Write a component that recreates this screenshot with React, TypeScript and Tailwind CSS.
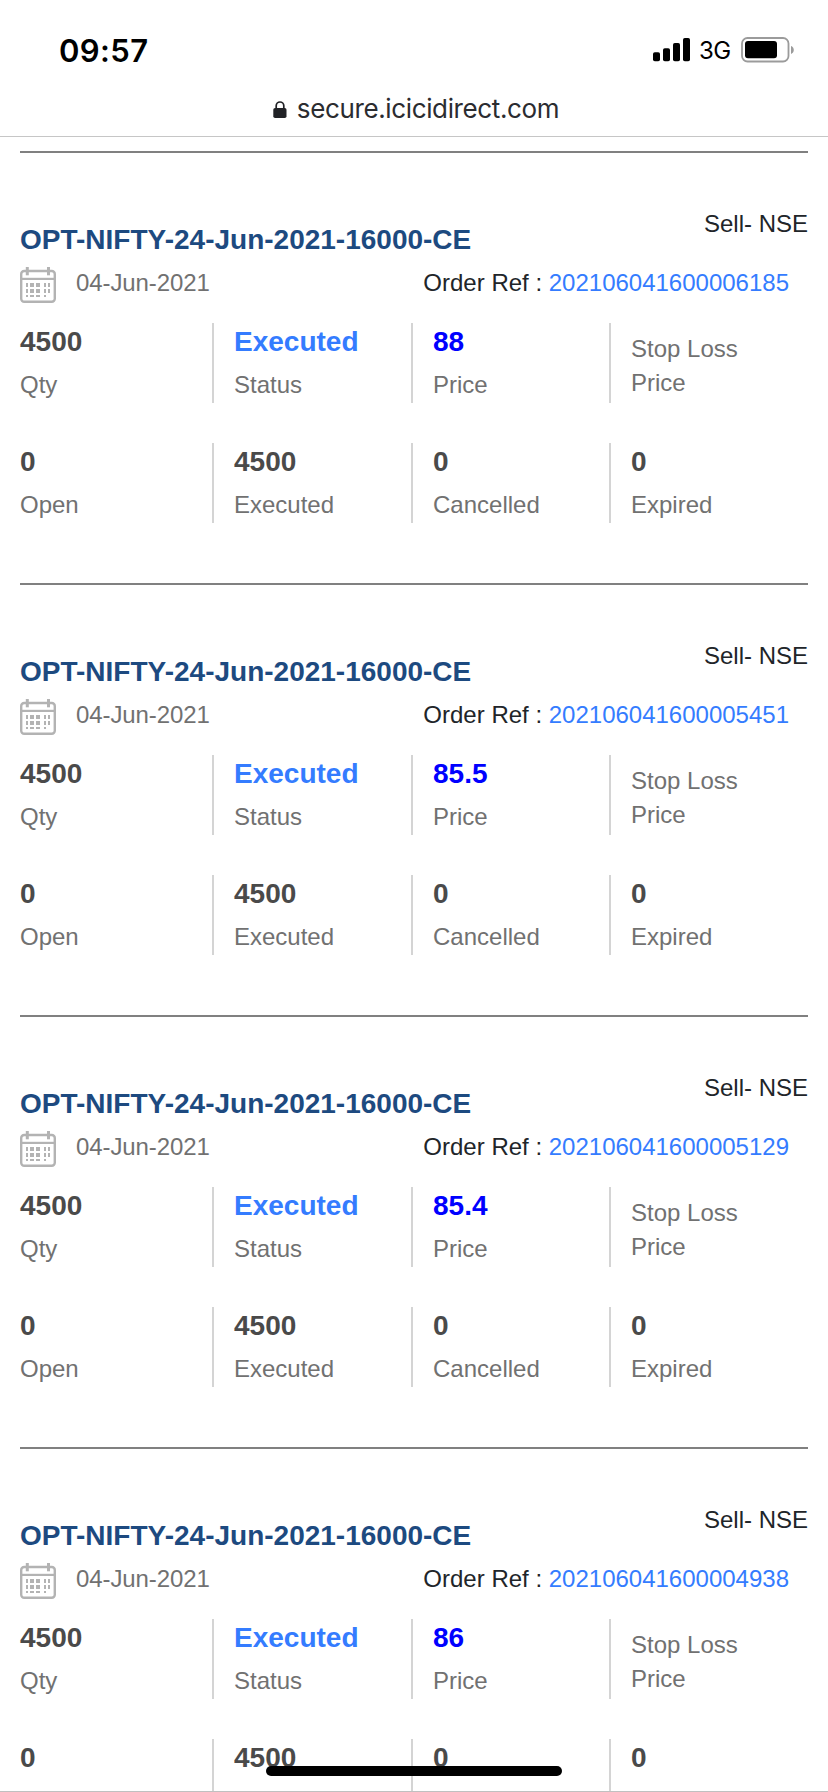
type Order = {
  ref: string;
  price: string;
};

const ORDERS: Order[] = [
  { ref: '202106041600006185', price: '88' },
  { ref: '202106041600005451', price: '85.5' },
  { ref: '202106041600005129', price: '85.4' },
  { ref: '202106041600004938', price: '86' },
];

function StatusBar() {
  return (
    <div className="flex h-[85px] items-center justify-between pt-[15px] pr-[33px] pl-[59px]">
      <span className="pt-px text-[31px] leading-9 font-semibold tracking-[0.4px] text-black">09:57</span>
      <div className="flex items-center">
        <svg className="h-6 w-[38px]" viewBox="0 0 38 24" fill="#000">
          <rect x="0" y="14.2" width="7" height="9" rx="1.8" />
          <rect x="10" y="10.2" width="7" height="13" rx="1.8" />
          <rect x="20" y="5" width="7" height="18.2" rx="1.8" />
          <rect x="30" y="0" width="7" height="23.2" rx="1.8" />
        </svg>
        <span className="ml-2 w-[42px] pt-0.5 text-[24px] leading-7 tracking-[-0.6px] text-black">3G</span>
        <svg className="h-[26px] w-[54px]" viewBox="0 0 54 26">
          <rect x="1" y="1" width="46.5" height="23.5" rx="5.5" fill="none" stroke="#9b9b9b" strokeWidth="1.8" />
          <rect x="4" y="4" width="32" height="17.2" rx="3" fill="#000" />
          <path d="M50 9v8c1.700-.6 2.800-2.200 2.800-4s-1.100-3.400-2.800-4z" fill="#9b9b9b" />
        </svg>
      </div>
    </div>
  );
}

function AddressBar() {
  return (
    <div className="flex h-12 items-center justify-center pl-1">
      <svg className="mr-2.5 h-[17px] w-[14px]" viewBox="0 0 14 17">
        <path d="M3.200 8V4.800a3.800 3.800 0 0 1 7.600 0V8" fill="none" stroke="#212226" strokeWidth="1.700" />
        <rect x="0.300" y="7" width="13.200" height="10" rx="1.800" fill="#212226" />
      </svg>
      <span className="text-[26px] leading-8 tracking-[-0.37px] text-[#2b2c30]">secure.icicidirect.com</span>
    </div>
  );
}

function CalendarIcon() {
  return (
    <svg className="h-9 w-9" viewBox="0 0 36 36" fill="#b3b3b3">
      <rect x="1.200" y="4" width="33.600" height="30.800" rx="3" fill="none" stroke="#b3b3b3" strokeWidth="2.400" />
      <rect x="5.800" y="0" width="3" height="8.300" />
      <rect x="27" y="0" width="3" height="8.300" />
      <rect x="1" y="10.800" width="34" height="2.200" />
      <path d="M6 16h2v4H6zM10 16h4v4h-4zM16 16h4v4h-4zM24 16h2v4h-2zM28 16h2v4h-2z" />
      <path d="M6 22h2v4H6zM10 22h4v4h-4zM16 22h4v4h-4zM24 22h2v4h-2zM28 22h2v4h-2z" />
      <path d="M6 28h2v2H6zM10 28h4v2h-4zM16 28h4v2h-4zM24 28h2v2h-2z" />
    </svg>
  );
}

function Cell({ value, label, first, color = 'text-[#4a4a4a]' }: { value?: string; label: string; first?: boolean; color?: string }) {
  return (
    <div className={first ? '' : 'border-l-2 border-[#d4d4d4] pl-5'}>
      {value ? (
        <>
          <div className={`pt-[3px] text-[28px] leading-8 font-bold ${color}`}>{value}</div>
          <div className="mt-2.5 text-[24px] leading-[34px] text-[#717171]">{label}</div>
        </>
      ) : (
        <div className="w-36 pt-[9px] text-[24px] leading-[34px] text-[#717171]">{label}</div>
      )}
    </div>
  );
}

function OrderCard({ order }: { order: Order }) {
  return (
    <section className="mx-5 h-[432px] border-t-2 border-[#808080]">
      <div className="flex justify-between pt-[53px]">
        <h2 className="pt-[18px] text-[28px] leading-8 font-bold text-[#1d4a80]">OPT-NIFTY-24-Jun-2021-16000-CE</h2>
        <span className="text-[24px] leading-9 text-[#212529]">Sell- NSE</span>
      </div>
      <div className="mt-[9px] flex h-10 pr-[19px]">
        <div className="pt-[2px]">
          <CalendarIcon />
        </div>
        <span className="ml-5 text-[24px] leading-9 tracking-[-0.1px] text-[#717171]">04-Jun-2021</span>
        <span className="ml-auto text-[24px] leading-9 text-[#212529]">
          Order Ref : <a className="text-[#347cff]">{order.ref}</a>
        </span>
      </div>
      <div className="mt-[18px] grid grid-cols-[192px_199px_198px_199px] grid-rows-[80px_80px] gap-y-10">
        <Cell first value="4500" label="Qty" />
        <Cell value="Executed" label="Status" color="text-[#347cff]" />
        <Cell value={order.price} label="Price" color="text-[#0000ff]" />
        <Cell label="Stop Loss Price" />
        <Cell first value="0" label="Open" />
        <Cell value="4500" label="Executed" />
        <Cell value="0" label="Cancelled" />
        <Cell value="0" label="Expired" />
      </div>
    </section>
  );
}

export default function App() {
  return (
    <div className="relative h-[1792px] w-[828px] overflow-hidden bg-white">
      <header className="h-[137px] border-b border-[#c6c6c6] font-[Inter,sans-serif]">
        <StatusBar />
        <AddressBar />
      </header>

      {/* Order book */}
      <main className="pt-3.5 font-['Liberation_Sans',Arial,sans-serif]">
        {ORDERS.map((order) => (
          <OrderCard key={order.ref} order={order} />
        ))}
      </main>

      {/* Home indicator and the toolbar edge below it */}
      <div className="absolute bottom-4 left-[266px] h-2.5 w-[296px] rounded-full bg-black" />
      <div className="absolute bottom-0 h-px w-full bg-[#c0c0c0]" />
    </div>
  );
}
